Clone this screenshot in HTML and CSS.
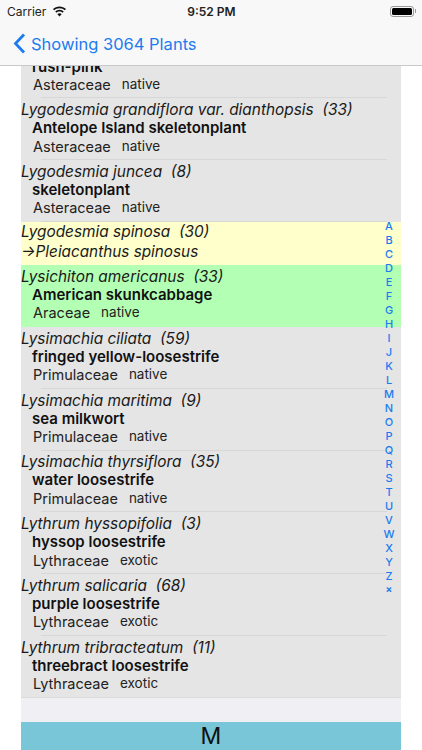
FILE: index.html
```html
<!DOCTYPE html>
<html lang="en">
<head>
<meta charset="utf-8">
<title>Plants</title>
<link rel="stylesheet" href="styles.css">
</head>
<body>
<div class="screen">
  <header class="top">
    <div class="status">
      <div class="status-left">
        <span>Carrier</span>
        <svg class="wifi" width="15" height="11" viewBox="0 0 15 11"><path d="M7.5 2.2c2.1 0 4 .8 5.4 2.1l1.1-1.2C12.300 1.500 10 .5 7.500 .5S2.700 1.500 1 3.100l1.100 1.200C3.500 3 5.400 2.200 7.500 2.200z"/><path d="M7.500 5.500c1.200 0 2.300.5 3.100 1.200l1.100-1.200C10.600 4.500 9.100 3.800 7.500 3.800s-3.100.7-4.200 1.700l1.100 1.200c.8-.7 1.900-1.200 3.100-1.200z"/><path d="M7.500 10.500l2.100-2.300c-.5-.5-1.300-.9-2.100-.9s-1.600.4-2.100.9z"/></svg>
      </div>
      <span class="clock">9:52 PM</span>
      <div class="battery"><span class="battery-body"><span class="battery-fill"></span></span><span class="battery-tip"></span></div>
    </div>
    <nav class="nav">
      <svg class="chevron" width="13" height="21" viewBox="0 0 13 21"><path d="M11 1.500 2.500 10.500 11 19.500" fill="none" stroke="#1b7cf0" stroke-width="2.800"/></svg>
      <span class="nav-title">Showing 3064 Plants</span>
    </nav>
  </header>
  <main class="list-wrap">
    <div class="list">
      <section class="row clipped"><p class="common">rush-pink</p><p class="meta"><span>Asteraceae</span><span class="status-tag">native</span></p></section>
      <section class="row"><p class="sci">Lygodesmia grandiflora var. dianthopsis&nbsp; (33)</p><p class="common">Antelope Island skeletonplant</p><p class="meta"><span>Asteraceae</span><span class="status-tag">native</span></p></section>
      <section class="row"><p class="sci">Lygodesmia juncea&nbsp; (8)</p><p class="common">skeletonplant</p><p class="meta"><span>Asteraceae</span><span class="status-tag">native</span></p></section>
      <section class="row yellow"><p class="sci">Lygodesmia spinosa&nbsp; (30)</p><p class="sci syn">→Pleiacanthus spinosus</p></section>
      <section class="row green"><p class="sci">Lysichiton americanus&nbsp; (33)</p><p class="common">American skunkcabbage</p><p class="meta"><span>Araceae</span><span class="status-tag">native</span></p></section>
      <section class="row"><p class="sci">Lysimachia ciliata&nbsp; (59)</p><p class="common">fringed yellow-loosestrife</p><p class="meta"><span>Primulaceae</span><span class="status-tag">native</span></p></section>
      <section class="row"><p class="sci">Lysimachia maritima&nbsp; (9)</p><p class="common">sea milkwort</p><p class="meta"><span>Primulaceae</span><span class="status-tag">native</span></p></section>
      <section class="row"><p class="sci">Lysimachia thyrsiflora&nbsp; (35)</p><p class="common">water loosestrife</p><p class="meta"><span>Primulaceae</span><span class="status-tag">native</span></p></section>
      <section class="row"><p class="sci">Lythrum hyssopifolia&nbsp; (3)</p><p class="common">hyssop loosestrife</p><p class="meta"><span>Lythraceae</span><span class="status-tag">exotic</span></p></section>
      <section class="row"><p class="sci">Lythrum salicaria&nbsp; (68)</p><p class="common">purple loosestrife</p><p class="meta"><span>Lythraceae</span><span class="status-tag">exotic</span></p></section>
      <section class="row last"><p class="sci">Lythrum tribracteatum&nbsp; (11)</p><p class="common">threebract loosestrife</p><p class="meta"><span>Lythraceae</span><span class="status-tag">exotic</span></p></section>
      <div class="gap"></div>
      <div class="section-head">M</div>
    </div>
    <aside class="index">
      <span>A</span><span>B</span><span>C</span><span>D</span><span>E</span><span>F</span><span>G</span><span>H</span><span>I</span><span>J</span><span>K</span><span>L</span><span>M</span><span>N</span><span>O</span><span>P</span><span>Q</span><span>R</span><span>S</span><span>T</span><span>U</span><span>V</span><span>W</span><span>X</span><span>Y</span><span>Z</span><span class="close">×</span>
    </aside>
  </main>
</div>
</body>
</html>
```
FILE: styles.css
```css
* { box-sizing: border-box; }
html, body { margin: 0; padding: 0; }
body { background: #fff; font-family: Inter, "Liberation Sans", sans-serif; color: #111; }
p { margin: 0; }
.screen { width: 422px; height: 750px; overflow: hidden; display: flex; flex-direction: column; position: relative; }
.top { height: 66px; flex: none; background: #f8f8f8; border-bottom: 1px solid #c9c9cb; position: relative; z-index: 2; }
.status { height: 22px; padding: 0 6px 0 7px; display: flex; align-items: center; justify-content: space-between; position: relative; font-size: 12px; color: #222; }
.status-left { display: flex; align-items: center; gap: 6px; }
.wifi { fill: #111; }
.clock { position: absolute; left: 1px; right: 0; text-align: center; font-weight: 600; font-size: 12px; }
.battery { display: flex; align-items: center; gap: 1px; }
.battery-body { width: 24px; height: 11px; border: 1px solid #999; border-radius: 3px; padding: 1px; display: block; }
.battery-fill { display: block; height: 100%; background: #000; border-radius: 1.500px; }
.battery-tip { width: 1px; height: 4px; background: #999; display: block; }
.nav { height: 43px; display: flex; align-items: center; padding-left: 13px; gap: 5px; }
.nav-title { color: #1b7cf0; font-size: 16.500px; }
.list-wrap { flex: 1; min-height: 0; position: relative; padding: 0 21px; }
.list { margin-top: -29.600px; background: #e5e5e5; }
.row { padding-top: 1.800px; height: 61.800px; position: relative; display: flex; flex-direction: column; }
.row.clipped { justify-content: flex-end; padding-bottom: 4px; }
.row::after { content: ""; position: absolute; left: 20px; right: 14px; bottom: 0; height: 1px; background: #d7d7d7; }
.row.yellow::after, .row.green::after { display: none; }
.row.last::after { left: 0; right: 0; background: #dcdcdc; }
.yellow { background: #ffffcc; height: 43.400px; padding-top: 1px; }
.green { background: #b3ffb3; }
.sci { font-style: italic; font-size: 15.400px; line-height: 20px; color: #1a1a1a; }
.yellow .sci { line-height: 18px; }
.yellow .syn { line-height: 22px; font-size: 15.300px; }
.common { font-weight: 600; font-size: 15px; line-height: 19px; padding-left: 11px; margin-top: -2px; }
.meta { padding-left: 12px; font-size: 14.500px; line-height: 19px; margin-top: -0.500px; display: flex; align-items: flex-start; gap: 11px; color: #222; }
.status-tag { font-size: 13.500px; line-height: 18px; }
.gap { height: 24px; background: #efeff4; }
.section-head { height: 28px; background: #78c6d8; text-align: center; font-size: 23px; line-height: 27px; padding-top: 1px; color: #111; overflow: hidden; }
.index { position: absolute; top: 153px; right: 21px; width: 24px; display: flex; flex-direction: column; align-items: center; color: #1b7cf0; font-size: 11px; font-weight: 500; line-height: 14px; }
.index span { height: 14px; display: block; }
.index .close { height: 13px; line-height: 13px; font-size: 10px; font-weight: 700; }
```
